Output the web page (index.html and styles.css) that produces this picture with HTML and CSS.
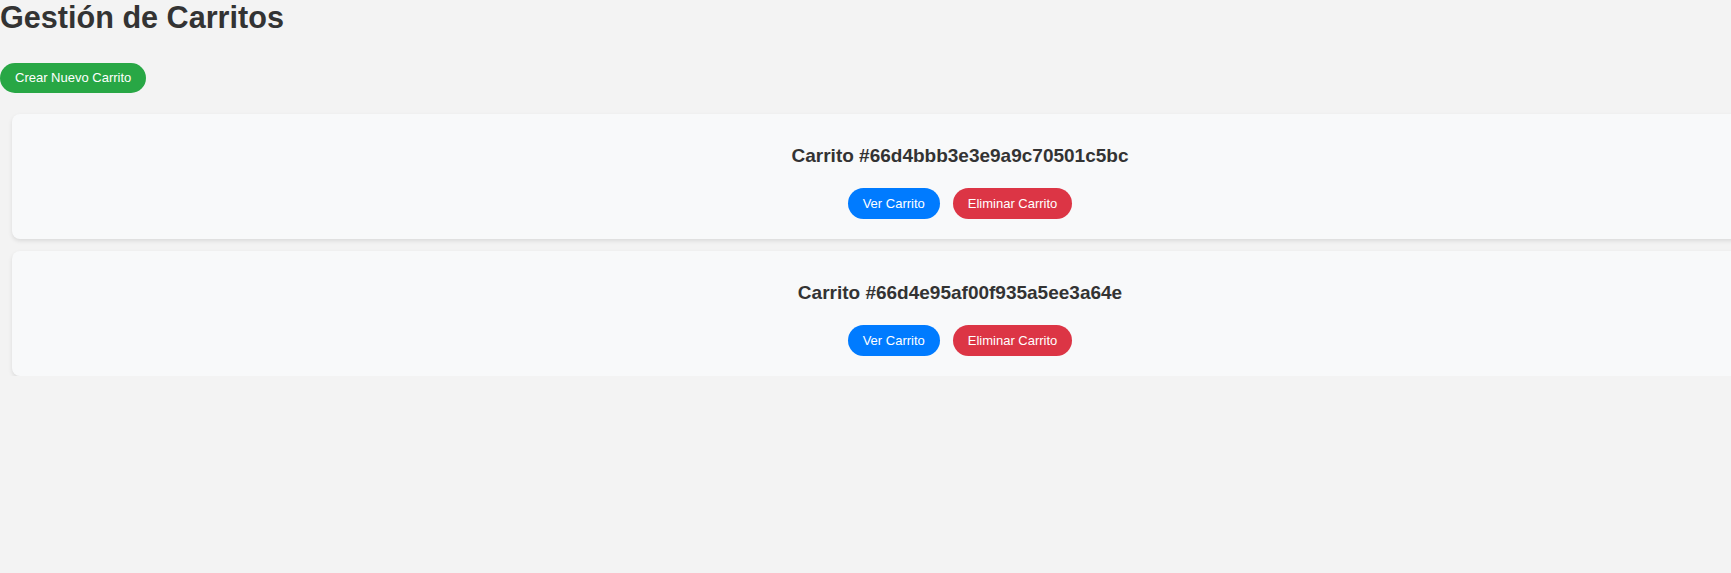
FILE: index.html
```html
<!DOCTYPE html>
<html lang="es">
<head>
<meta charset="utf-8">
<title>Gestión de Carritos</title>
<link rel="stylesheet" href="styles.css">
</head>
<body>
<div class="page">
  <h1 class="title">Gestión de Carritos</h1>
  <button class="btn btn-green">Crear Nuevo Carrito</button>
  <div class="cart-list">
    <div class="cart">
      <h3 class="cart-title">Carrito #66d4bbb3e3e9a9c70501c5bc</h3>
      <div class="actions">
        <button class="btn btn-blue">Ver Carrito</button>
        <button class="btn btn-red">Eliminar Carrito</button>
      </div>
    </div>
    <div class="cart">
      <h3 class="cart-title">Carrito #66d4e95af00f935a5ee3a64e</h3>
      <div class="actions">
        <button class="btn btn-blue">Ver Carrito</button>
        <button class="btn btn-red">Eliminar Carrito</button>
      </div>
    </div>
  </div>
</div>
</body>
</html>
```
FILE: styles.css
```css
html {
  overflow: hidden;
}
body {
  margin: 0;
  background: #f3f3f3;
  font-family: "Liberation Sans", Arial, sans-serif;
  color: #333;
}
.page {
  width: 1920px;
  display: flex;
  flex-direction: column;
  align-items: flex-start;
}
.title {
  margin: 0 0 29px;
  font-size: 30.6px;
  font-weight: bold;
  line-height: 34px;
  color: #333;
}
.btn {
  font-family: "Liberation Sans", Arial, sans-serif;
  font-size: 13px;
  line-height: 15px;
  padding: 8px 15px;
  border: none;
  border-radius: 16px;
  color: #fff;
  cursor: pointer;
}
.btn-green { background: #28a745; padding: 7px 15px 8px; }
.btn-blue { background: #007bff; }
.btn-red { background: #dc3545; }
.cart-list {
  align-self: stretch;
  display: flex;
  flex-direction: column;
  gap: 12px;
  margin: 21px 12px 0;
}
.cart {
  background: #f8f9fa;
  border-radius: 8px;
  box-shadow: 0 2px 4px rgba(0, 0, 0, 0.1);
  padding: 20px 20px 20px;
  text-align: center;
}
.cart-title {
  margin: 11px 0 21px;
  font-size: 19px;
  font-weight: bold;
  line-height: 22px;
  color: #333;
}
.actions {
  display: flex;
  justify-content: center;
  gap: 13px;
}
```
